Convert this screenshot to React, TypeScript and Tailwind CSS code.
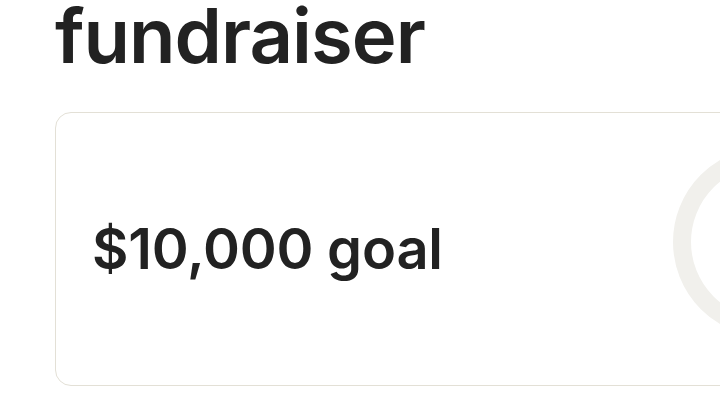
import React from "react";

function GoalRing() {
  return (
    <div className="mb-[14px] h-[190px] w-[190px] shrink-0 rounded-full border-[18px] border-[#f1f0ec]" />
  );
}

export default function App() {
  return (
    <div
      className="h-[405px] w-[720px] overflow-hidden bg-white text-[#222222]"
      style={{ fontFamily: "Inter, 'Noto Sans', sans-serif" }}
    >
      <div className="pl-[55px]">
        <h1 className="-mt-[3px] text-[76px] font-semibold leading-none tracking-[-1px]">
          fundraiser
        </h1>
        <div className="mt-[39px] flex h-[274px] w-[845px] shrink-0 items-center justify-between rounded-2xl border border-[#e3e0d6] pl-[36px] pr-[36px]">
          <p className="text-[56px] font-semibold leading-none tracking-[-0.2px]">
            $10,000 goal
          </p>
          <GoalRing />
        </div>
      </div>
    </div>
  );
}
